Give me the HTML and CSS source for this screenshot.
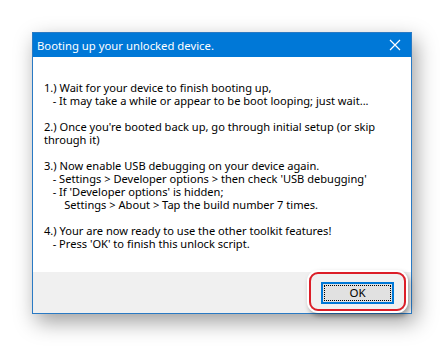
FILE: index.html
```
<!DOCTYPE html>
<html lang="en">
<head>
  <meta charset="UTF-8" />
  <title>Booting up your unlocked device.</title>
  <link rel="stylesheet" href="styles.css">
</head>
<body>
  <div class="dialog">
    <div class="title-bar">
      <span class="title">Booting up your unlocked device.</span>
      <svg class="close" width="12" height="12" viewBox="0 0 12 12">
        <path d="M1 1 L11 11 M11 1 L1 11" stroke="#fff" stroke-width="1.2" fill="none"/>
      </svg>
    </div>
    <div class="content">
      <p class="msg">1.) Wait for your device to finish booting up,
   - It may take a while or appear to be boot looping; just wait...

2.) Once you're booted back up, go through initial setup (or skip
through it)

3.) Now enable USB debugging on your device again.
   - Settings &gt; Developer options &gt; then check 'USB debugging'
   - If 'Developer options' is hidden;
       Settings &gt; About &gt; Tap the build number 7 times.

4.) Your are now ready to use the other toolkit features!
   - Press 'OK' to finish this unlock script.</p>
    </div>
    <div class="footer">
      <div class="highlight">
        <button class="ok-btn"><span class="focus">OK</span></button>
      </div>
    </div>
  </div>
</body>
</html>
```
FILE: styles.css
```
* {
  margin: 0;
  padding: 0;
  box-sizing: border-box;
}
body {
  background: #fff;
  padding: 32px;
  font-family: "Noto Sans", "Open Sans", sans-serif;
}
.dialog {
  width: 380px;
  height: 282px;
  border: 1px solid #2a7ac4;
  background: #fff;
  display: flex;
  flex-direction: column;
  box-shadow: 4px 8px 20px rgba(0,0,0,0.38);
}
.title-bar {
  height: 24px;
  background: #0078d7;
  color: #fff;
  display: flex;
  align-items: center;
  justify-content: space-between;
  padding: 0 10px 0 4px;
}
.title {
  font-size: 11.3px;
}
.content {
  flex: 1;
  padding: 24px 0 0 11px;
}
.msg {
  white-space: pre;
  font-size: 11.1px;
  line-height: 13px;
  color: #000;
}
.footer {
  height: 41px;
  background: #f0f0f0;
  display: flex;
  justify-content: flex-end;
  align-items: flex-start;
  padding: 0 5px 0 0;
}
.highlight {
  padding: 8px 10px 5px 10px;
  border: 2px solid #dc1e28;
  border-radius: 9px;
  box-shadow: 0 0 0 2px #fff, 2px 3px 5px 2px rgba(0,0,0,0.35);
}
.ok-btn {
  width: 73px;
  height: 22px;
  background: #e1e1e1;
  border: 2px solid #0078d7;
  font-family: inherit;
  font-size: 11.5px;
  color: #000;
  display: flex;
  align-items: center;
  justify-content: center;
  padding: 1px;
}
.focus {
  width: 100%;
  height: 100%;
  border: 1px dotted #000;
  display: flex;
  align-items: center;
  justify-content: center;
  line-height: 1;
}
```
